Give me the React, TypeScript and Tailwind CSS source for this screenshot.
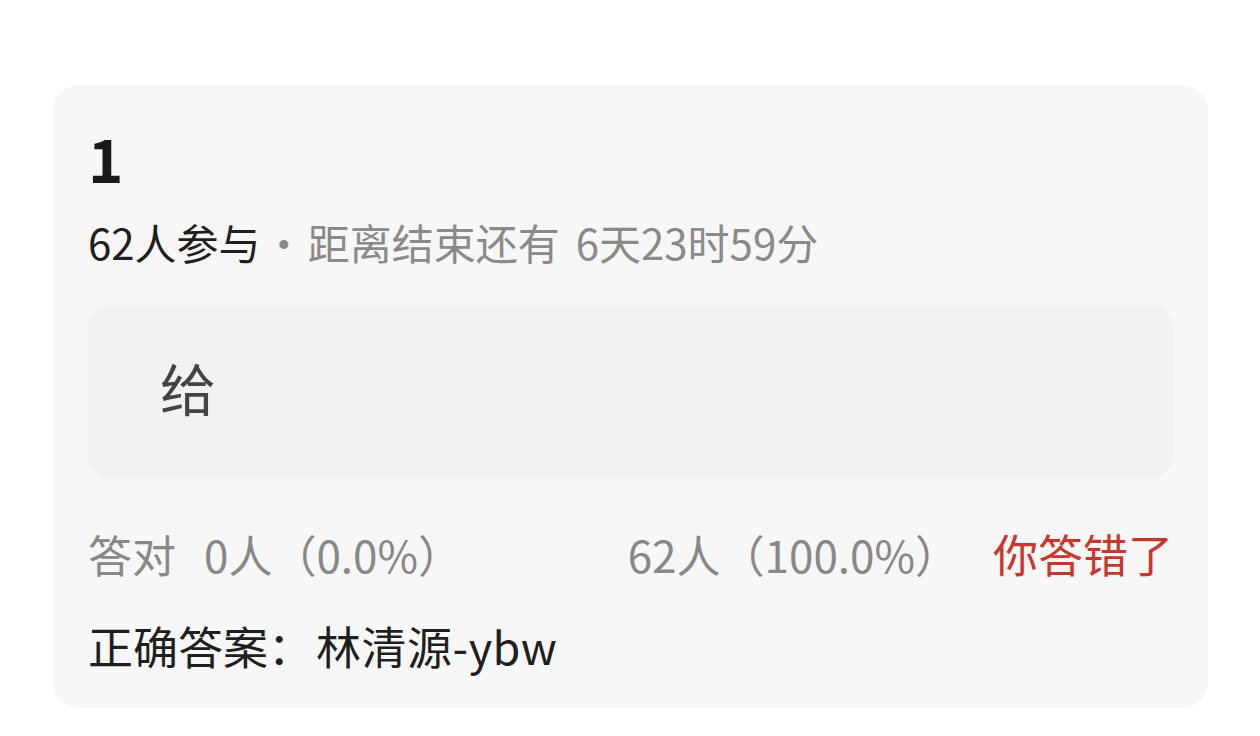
import React from "react";

export default function App() {
  const font = { fontFamily: '"Noto Sans CJK SC", "Noto Sans", sans-serif' };
  return (
    <div className="w-[1260px] h-[736px] bg-white overflow-hidden" style={font}>
      <div className="pt-[85px] pl-[53px] pr-[52px]">
        <div className="bg-[#f7f7f7] rounded-[26px] px-[35px] pt-[36px] pb-[34px]">
          <div className="text-[60px] leading-[72px] font-semibold text-[#1a1a1a]">1</div>
          <div className="mt-[21px] text-[42px] leading-[56px] flex items-center whitespace-nowrap">
            <span className="text-[#1f1f1f]">62人参与</span>
            <span className="text-[#8a8a8a] ml-[2px] mr-[3px]">·</span>
            <span className="text-[#8a8a8a]">距离结束还有</span>
            <span className="text-[#8a8a8a] ml-[16px]">6天23时59分</span>
          </div>
          <div className="mt-[35px] h-[173px] bg-[#f2f2f2] rounded-[22px] flex items-center pl-[72px] pb-[10px]">
            <span className="text-[56px] leading-[64px] text-[#444444]">给</span>
          </div>
          <div className="mt-[48px] flex items-center justify-between text-[44px] leading-[56px] whitespace-nowrap">
            <div className="flex items-center text-[#888888]">
              <span>答对</span>
              <span className="ml-[28px]">0人（0.0%）</span>
            </div>
            <div className="flex items-center">
              <span className="text-[#888888]">62人（100.0%）</span>
              <span className="ml-[34px] text-[45px] text-[#c8362e]">你答错了</span>
            </div>
          </div>
          <div className="mt-[36px] text-[45px] leading-[56px] text-[#1f1f1f] whitespace-nowrap flex items-center">
            <span>正确答案：</span>
            <span className="ml-[3px] tracking-[0.5px]">林清源-ybw</span>
          </div>
        </div>
      </div>
    </div>
  );
}
